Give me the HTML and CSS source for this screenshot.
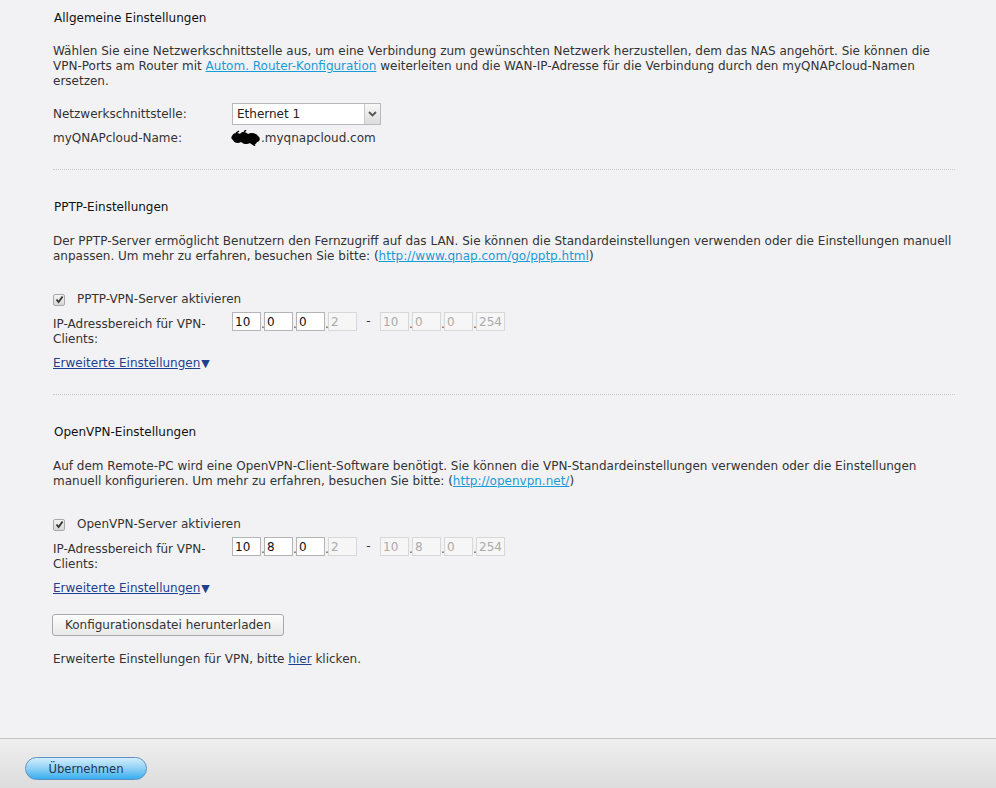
FILE: index.html
```html
<!DOCTYPE html>
<html>
<head>
	<title>VPN-Server</title>
	<link rel="stylesheet" href="styles.css">
</head>
<body>
	<div class="page">
		<div class="content">

			<!-- Allgemeine Einstellungen -->
			<div class="section">
				<h2>Allgemeine Einstellungen</h2>
				<p class="desc">Wählen Sie eine Netzwerkschnittstelle aus, um eine Verbindung zum gewünschten Netzwerk herzustellen, dem das NAS angehört. Sie können die VPN-Ports am Router mit <a class="ext" href="#">Autom. Router-Konfiguration</a> weiterleiten und die WAN-IP-Adresse für die Verbindung durch den myQNAPcloud-Namen ersetzen.</p>
				<div class="row row-select">
					<label>Netzwerkschnittstelle:</label>
					<div class="select">
						<span class="select-value">Ethernet 1</span>
						<span class="select-btn">
							<svg width="9" height="6" viewBox="0 0 9 6"><path d="M1 1 L4.5 4.5 L8 1" fill="none" stroke="#555" stroke-width="1.8"/></svg>
						</span>
					</div>
				</div>
				<div class="row">
					<label>myQNAPcloud-Name:</label>
					<span class="cloud"><svg class="blot" width="30" height="16" viewBox="0 0 30 16"><path d="M1 6 C3 2 7 3 9 4 C11 1 15 2 17 4 C20 2 25 3 27 6 C30 8 29 12 26 12 C25 15 21 16 19 13 C16 15 12 14 10 12 C7 14 3 13 2 10 C0 9 0 7 1 6 Z" fill="#000"/><path d="M5 3 L8 1 M13 2 L15 0 M22 14 L24 16" stroke="#000" stroke-width="1.5"/></svg>.myqnapcloud.com</span>
				</div>
			</div>

			<!-- PPTP -->
			<div class="section">
				<h2>PPTP-Einstellungen</h2>
				<p class="desc">Der PPTP-Server ermöglicht Benutzern den Fernzugriff auf das LAN. Sie können die Standardeinstellungen verwenden oder die Einstellungen manuell anpassen. Um mehr zu erfahren, besuchen Sie bitte: (<a class="ext" href="#">http://www.qnap.com/go/pptp.html</a>)</p>
				<div class="check-row">
					<span class="check"><svg width="9" height="9" viewBox="0 0 9 9"><path d="M1.5 4.5 L3.6 7 L7.6 1.5" fill="none" stroke="#333" stroke-width="1.8"/></svg></span>
					PPTP-VPN-Server aktivieren
				</div>
				<div class="row row-ip">
					<label>IP-Adressbereich für VPN-Clients:</label>
					<div class="ip-range">
						<input class="ip" value="10"><span class="dot">.</span><input class="ip" value="0"><span class="dot">.</span><input class="ip" value="0"><span class="dot">.</span><input class="ip" value="2" disabled>
						<span class="dash">-</span>
						<input class="ip" value="10" disabled><span class="dot">.</span><input class="ip" value="0" disabled><span class="dot">.</span><input class="ip" value="0" disabled><span class="dot">.</span><input class="ip" value="254" disabled>
					</div>
				</div>
				<div class="more-row"><a class="more" href="#">Erweiterte Einstellungen</a><span class="arrow">▼</span></div>
			</div>

			<!-- OpenVPN -->
			<div class="section last">
				<h2>OpenVPN-Einstellungen</h2>
				<p class="desc">Auf dem Remote-PC wird eine OpenVPN-Client-Software benötigt. Sie können die VPN-Standardeinstellungen verwenden oder die Einstellungen manuell konfigurieren. Um mehr zu erfahren, besuchen Sie bitte: (<a class="ext" href="#">http://openvpn.net/</a>)</p>
				<div class="check-row">
					<span class="check"><svg width="9" height="9" viewBox="0 0 9 9"><path d="M1.5 4.5 L3.6 7 L7.6 1.5" fill="none" stroke="#333" stroke-width="1.8"/></svg></span>
					OpenVPN-Server aktivieren
				</div>
				<div class="row row-ip">
					<label>IP-Adressbereich für VPN-Clients:</label>
					<div class="ip-range">
						<input class="ip" value="10"><span class="dot">.</span><input class="ip" value="8"><span class="dot">.</span><input class="ip" value="0"><span class="dot">.</span><input class="ip" value="2" disabled>
						<span class="dash">-</span>
						<input class="ip" value="10" disabled><span class="dot">.</span><input class="ip" value="8" disabled><span class="dot">.</span><input class="ip" value="0" disabled><span class="dot">.</span><input class="ip" value="254" disabled>
					</div>
				</div>
				<div class="more-row"><a class="more" href="#">Erweiterte Einstellungen</a><span class="arrow">▼</span></div>
				<div class="download-row">
					<button class="btn">Konfigurationsdatei herunterladen</button>
				</div>
				<p class="note">Erweiterte Einstellungen für VPN, bitte <a class="more" href="#">hier</a> klicken.</p>
			</div>

		</div>
		<div class="footer">
			<button class="btn-apply">Übernehmen</button>
		</div>
	</div>
</body>
</html>
```

FILE: styles.css
```css
html,
body {
	height: 100%;
}

body {
	background-color: #f2f2f4;
	color: #333;
	font-family: "DejaVu Sans", sans-serif;
	font-size: 12px;
	line-height: 15px;
	margin: 0;
	padding: 0;
}

.page {
	display: flex;
	flex-direction: column;
	height: 100%;
}

.content {
	flex: 1;
	padding: 11px 41px 0 53px;
}

.section {
	border-bottom: 1px dotted #c9c9c9;
	padding-bottom: 23px;
	margin-bottom: 30px;
}

.section.last {
	border-bottom: none;
}

h2 {
	color: #111;
	font-size: 12px;
	font-weight: normal;
	margin: 0 0 0 1px;
}

.desc {
	margin: 18px 0 0 0;
}

.section + .section .desc {
	margin-top: 19px;
}

a.ext {
	color: #1a9ad8;
}

a.more {
	color: #1d3f8f;
}

.arrow {
	color: #1d3f8f;
	font-size: 11px;
	margin-left: 1px;
}

.row {
	display: flex;
	align-items: center;
}

.row label {
	width: 179px;
	flex-shrink: 0;
}

.row-select {
	margin-top: 14px;
	margin-bottom: 5px;
}

.select {
	display: flex;
	width: 147px;
	height: 20px;
	border: 1px solid #b9b9b9;
	background: #fff;
}

.select-value {
	flex: 1;
	padding: 3px 0 0 4px;
	color: #222;
}

.select-btn {
	display: flex;
	align-items: center;
	justify-content: center;
	width: 15px;
	border-left: 1px solid #c9c9c9;
	background: linear-gradient(#f8f8f8, #dcdcdc);
}

.cloud {
	display: flex;
	align-items: center;
	color: #333;
}

.blot {
	margin-left: -1px;
}

.check-row {
	display: flex;
	align-items: center;
	margin-top: 28px;
}

.check {
	display: flex;
	align-items: center;
	justify-content: center;
	width: 10px;
	height: 10px;
	border: 1px solid #a8a8a8;
	border-radius: 2px;
	background: linear-gradient(#f3f3f3, #d6d6d6);
	margin-right: 12px;
}

.row-ip {
	align-items: flex-start;
	margin-top: 5px;
}

.row-ip label {
	width: 170px;
	margin-right: 9px;
	padding-top: 5px;
}

.ip-range {
	display: flex;
	align-items: flex-end;
}

.ip {
	width: 25px;
	height: 17px;
	border: 1px solid #b4b4b4;
	background: #fff;
	color: #111;
	font-family: inherit;
	font-size: 12px;
	margin: 0;
	padding: 0 0 0 2px;
	outline: none;
}

.ip:disabled {
	background: #f6f6f6;
	border-color: #d8d8d8;
	color: #aaa;
}

.dot {
	width: 3px;
	text-align: center;
	line-height: 14px;
	color: #555;
}

.dash {
	width: 23px;
	text-align: center;
	line-height: 19px;
}

.more-row {
	margin-top: 9px;
}

.download-row {
	margin-top: 18px;
}

.btn {
	width: 232px;
	height: 22px;
	margin-left: -1px;
	border: 1px solid #a9a9a9;
	border-radius: 3px;
	background: linear-gradient(#fdfdfd, #e8e8e8);
	color: #333;
	font-family: inherit;
	font-size: 12px;
	padding: 0;
}

.note {
	margin: 16px 0 0 0;
}

.footer {
	height: 49px;
	border-top: 1px solid #c4c4c4;
	background: linear-gradient(#efefef, #dcdcdc);
	padding-left: 25px;
	display: flex;
	align-items: flex-start;
}

.btn-apply {
	margin-top: 18px;
	width: 122px;
	height: 23px;
	border: 1px solid #5f92c2;
	border-radius: 12px;
	background: linear-gradient(#d3eefc, #8fd0f5 50%, #36aeee);
	color: #1e3550;
	font-family: inherit;
	font-size: 11.6px;
	padding: 0;
}
```
